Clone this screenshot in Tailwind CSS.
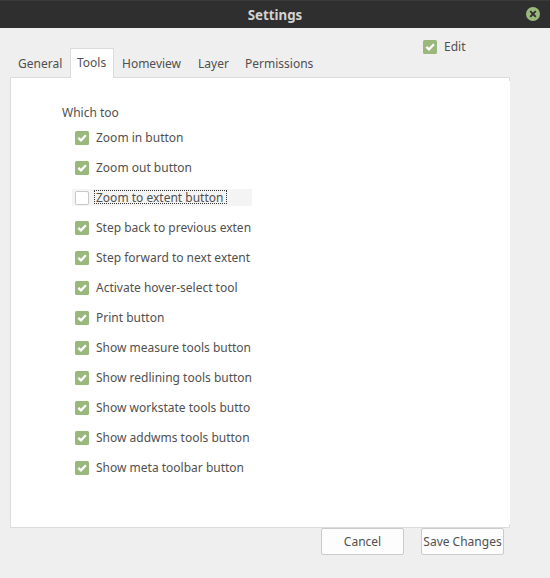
<!DOCTYPE html>
<html lang="en">
<head>
<meta charset="utf-8">
<title>Settings</title>
<script src="https://cdn.jsdelivr.net/npm/@tailwindcss/browser@4"></script>
</head>
<body class="h-[578px] w-[550px] overflow-hidden bg-[#efefef] font-['Noto_Sans',sans-serif] text-[12px] leading-[17px] text-[#505050]">
<svg class="hidden">
  <symbol id="on" viewBox="0 0 14 14"><rect width="14" height="14" rx="1.5" fill="#9ab87c"/><path d="M3.3 6.8 6 9.4 10.9 4.3" fill="none" stroke="#fff" stroke-width="2.3"/></symbol>
  <symbol id="off" viewBox="0 0 14 14"><rect x=".5" y=".5" width="13" height="13" rx="1.5" fill="#fff" stroke="#c8c8c8"/></symbol>
</svg>
<header class="grid h-7 grid-cols-[1fr_auto_1fr] items-center border-t border-[#3b3b3b] bg-[#2f2f2f]">
  <h1 class="col-start-2 pt-[2px] text-[13.3px] font-bold text-[#d3d3d3]">Settings</h1>
  <svg class="mr-[10px] mb-px h-[14px] w-[14px] justify-self-end" viewBox="0 0 14 14"><circle cx="7" cy="7" r="7" fill="#9ab87c"/><path d="M4.2 4.2 9.8 9.8M9.8 4.2 4.2 9.8" stroke="#2f2f2f" stroke-width="1.9"/></svg>
</header>
<main class="ml-[10px] w-[500px]">
  <div class="flex h-[49px] justify-between">
    <nav class="flex items-end whitespace-nowrap">
      <a class="w-[60px] pb-[5px] pl-2">General</a>
      <a class="z-10 -mb-px h-[30px] w-[44px] border border-b-0 border-[#dcdcdc] bg-white pt-[5px] pl-[6px]">Tools</a>
      <a class="w-[75px] pb-[5px] pl-2">Homeview</a>
      <a class="w-[48px] pb-[5px] pl-[9px]">Layer</a>
      <a class="pb-[5px] pl-2">Permissions</a>
    </nav>
    <label class="mt-[10px] flex w-[87px] gap-[7px]"><svg class="mt-[2px] h-[14px] w-[14px]"><use href="#on"/></svg>Edit</label>
  </div>
  <section class="relative h-[451px] border-y border-l border-[#dcdcdc] bg-white pt-[26px] pl-[51px]">
    <i class="absolute top-0 right-0 h-[3px] w-px bg-[#dcdcdc]"></i>
    <i class="absolute right-0 bottom-0 h-[3px] w-px bg-[#dcdcdc]"></i>
    <h2>Which too</h2>
    <ul class="mt-[8px] ml-[10px] flex w-[180px] flex-col gap-[13px] whitespace-nowrap">
      <li class="flex h-[17px] gap-[7px] overflow-hidden pl-[3px]"><svg class="mt-[2px] h-[14px] w-[14px] shrink-0"><use href="#on"/></svg>Zoom in button</li>
      <li class="flex h-[17px] gap-[7px] overflow-hidden pl-[3px]"><svg class="mt-[2px] h-[14px] w-[14px] shrink-0"><use href="#on"/></svg>Zoom out button</li>
      <li class="flex h-[17px] gap-[5px] overflow-hidden bg-[#f4f4f4] pl-[3px]"><svg class="mt-[2px] h-[14px] w-[14px] shrink-0"><use href="#off"/></svg><span class="mt-px h-[14px] w-[133px] border border-dotted border-[#333] pl-px leading-[13px]">Zoom to extent button</span></li>
      <li class="flex h-[17px] gap-[7px] overflow-hidden pl-[3px]"><svg class="mt-[2px] h-[14px] w-[14px] shrink-0"><use href="#on"/></svg>Step back to previous exten</li>
      <li class="flex h-[17px] gap-[7px] overflow-hidden pl-[3px]"><svg class="mt-[2px] h-[14px] w-[14px] shrink-0"><use href="#on"/></svg>Step forward to next extent</li>
      <li class="flex h-[17px] gap-[7px] overflow-hidden pl-[3px]"><svg class="mt-[2px] h-[14px] w-[14px] shrink-0"><use href="#on"/></svg>Activate hover-select tool</li>
      <li class="flex h-[17px] gap-[7px] overflow-hidden pl-[3px]"><svg class="mt-[2px] h-[14px] w-[14px] shrink-0"><use href="#on"/></svg>Print button</li>
      <li class="flex h-[17px] gap-[7px] overflow-hidden pl-[3px]"><svg class="mt-[2px] h-[14px] w-[14px] shrink-0"><use href="#on"/></svg>Show measure tools button</li>
      <li class="flex h-[17px] gap-[7px] overflow-hidden pl-[3px]"><svg class="mt-[2px] h-[14px] w-[14px] shrink-0"><use href="#on"/></svg>Show redlining tools button</li>
      <li class="flex h-[17px] gap-[7px] overflow-hidden pl-[3px]"><svg class="mt-[2px] h-[14px] w-[14px] shrink-0"><use href="#on"/></svg>Show workstate tools butto</li>
      <li class="flex h-[17px] gap-[7px] overflow-hidden pl-[3px]"><svg class="mt-[2px] h-[14px] w-[14px] shrink-0"><use href="#on"/></svg>Show addwms tools button</li>
      <li class="flex h-[17px] gap-[7px] overflow-hidden pl-[3px]"><svg class="mt-[2px] h-[14px] w-[14px] shrink-0"><use href="#on"/></svg>Show meta toolbar button</li>
    </ul>
  </section>
  <footer class="flex justify-end gap-[17px] pr-[6px] whitespace-nowrap">
    <button class="h-[27px] w-[83px] rounded-[2px] border border-[#cbcbcb] bg-[#fcfdfc]">Cancel</button>
    <button class="h-[27px] w-[83px] rounded-[2px] border border-[#cbcbcb] bg-[#fcfdfc]">Save Changes</button>
  </footer>
</main>
</body>
</html>
